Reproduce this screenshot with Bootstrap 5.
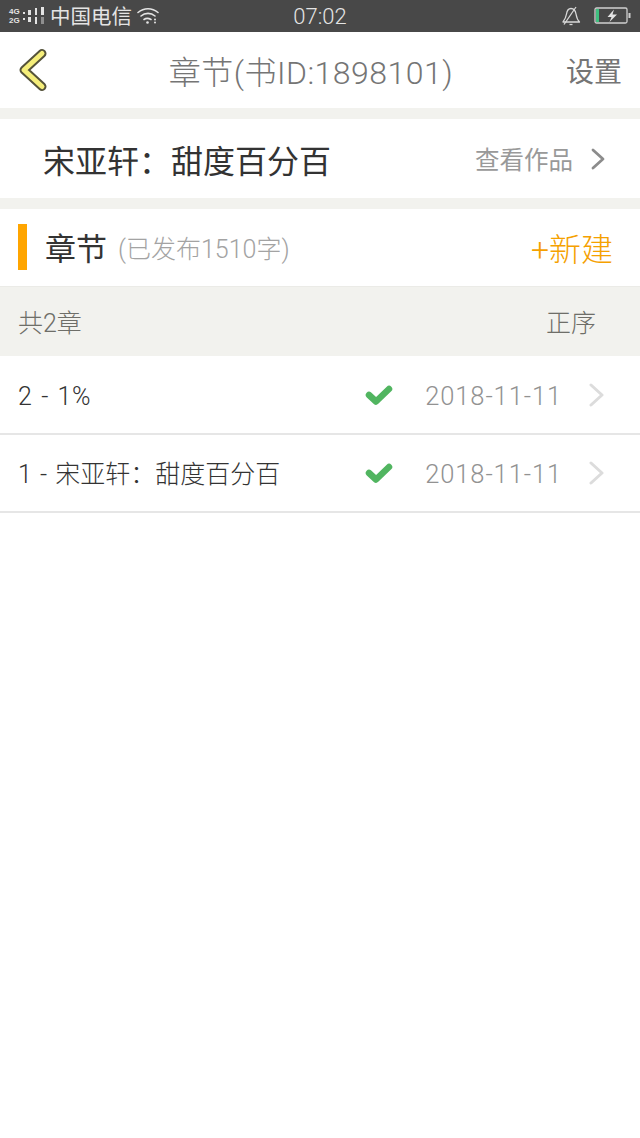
<!DOCTYPE html>
<html lang="zh">

<head>
    <meta charset="UTF-8">
    <meta name="viewport" content="width=device-width, initial-scale=1.0">
    <title>章节</title>
    <link href="https://cdn.jsdelivr.net/npm/bootstrap@5.3.2/dist/css/bootstrap.min.css" rel="stylesheet">
    <style>
        body {
            background: #fff;
            font-family: "Liberation Sans", "Noto Sans CJK SC", sans-serif;
            min-height: 1138px;
        }

        .status-bar {
            height: 32px;
            background: #484848;
            color: #e4e4e4;
            padding: 0 9px;
            position: relative;
        }

        .status-time {
            position: absolute;
            left: 0;
            right: 0;
            top: 5px;
            text-align: center;
            font-size: 22px;
            line-height: 24px;
            font-family: Roboto, sans-serif;
            font-weight: 300;
        }

        .carrier {
            font-size: 20.5px;
            line-height: 32px;
            margin-left: 4px;
            padding-top: 1px;
        }

        .net-label {
            font-size: 8px;
            line-height: 9px;
            font-weight: 700;
            width: 14px;
        }

        .status-bell {
            margin-right: 13px;
        }

        .top-bar {
            height: 76px;
            padding: 0 18px;
            position: relative;
        }

        .top-title {
            position: absolute;
            left: 0;
            right: 0;
            top: 20px;
            padding-right: 18px;
            text-align: center;
            font-size: 32px;
            line-height: 42px;
            letter-spacing: .5px;
            color: #757575;
            font-family: Roboto, "Noto Sans CJK SC", sans-serif;
            font-weight: 300;
        }

        .top-link {
            font-size: 28px;
            color: #757575;
            padding-top: 5px;
        }

        .gap-strip {
            background: #f2f2ee;
            height: 11px;
        }

        .book-row {
            height: 79px;
            padding: 0 35px 0 43px;
        }

        .book-name {
            font-size: 32px;
            color: #333;
            padding-top: 6px;
        }

        .book-link {
            font-size: 24.500px;
            color: #999;
            gap: 18px;
        }

        .book-link-text {
            padding-top: 5px;
        }

        .section-head {
            height: 77px;
            padding: 0 27px 0 18px;
        }

        .accent-bar {
            width: 9px;
            height: 46px;
            background: #ffa500;
            margin: 0 18px 2px 0;
        }

        .section-name {
            font-size: 31px;
            color: #333;
            padding-top: 6px;
        }

        .section-count {
            font-size: 25px;
            color: #a3a3a3;
            margin-left: 11px;
            padding-top: 5px;
            font-family: Roboto, "Noto Sans CJK SC", sans-serif;
            font-weight: 300;
        }

        .new-link {
            font-size: 32px;
            color: #f5a100;
            padding-top: 5px;
            font-family: Roboto, "Noto Sans CJK SC", sans-serif;
            font-weight: 300;
        }

        .sort-bar {
            height: 70px;
            background: #f2f2ee;
            border-top: 1px solid #ebebe7;
            padding: 0 44px 0 18px;
            font-size: 25px;
            color: #6e6e68;
            font-family: Roboto, "Noto Sans CJK SC", sans-serif;
            font-weight: 300;
        }

        .sort-bar span {
            padding-top: 5px;
        }

        .chapter-list {
            margin-top: 1px;
        }

        .chapter-list .list-group-item {
            height: 78px;
            padding: 0 35px 0 18px;
            border-color: #e6e6e6;
            border-width: 0 0 2px;
            font-family: Roboto, "Noto Sans CJK SC", sans-serif;
            font-weight: 300;
        }

        /* list-group-flush quita el borde de la última fila */
        .chapter-list .list-group-item:last-child {
            border-bottom-width: 2px;
        }

        .chapter-name {
            font-size: 25px;
            color: #333;
            word-spacing: 2px;
            padding-top: 3px;
        }

        .chapter-name-num {
            letter-spacing: .6px;
        }

        .chapter-date {
            font-size: 25.500px;
            letter-spacing: .9px;
            color: #929292;
            margin: 0 27px 0 32px;
            padding-top: 3px;
        }
    </style>
</head>

<body>
    <!-- Barra de estado -->
    <div class="status-bar d-flex align-items-center">
        <div class="net-label">4G<br>2G</div>
        <svg width="23" height="18" viewBox="0 0 23 18" fill="#e4e4e4">
            <rect x="0" y="5" width="2" height="2" />
            <rect x="0" y="11" width="2" height="2" />
            <rect x="5" y="3" width="3" height="5" />
            <rect x="5" y="10" width="3" height="5" />
            <rect x="12" y="1" width="2" height="7" />
            <rect x="12" y="10" width="2" height="7" />
            <rect x="18" y="0" width="3" height="8" />
            <rect x="18" y="10" width="3" height="7" fill="#8f8f8f" />
        </svg>
        <span class="carrier">中国电信</span>
        <svg class="ms-1" width="24" height="18" viewBox="0 0 24 18" fill="none" stroke="#e4e4e4" stroke-width="1.600" stroke-linecap="round">
            <path d="M2 5.500C8 .5 16 .5 22 5.500" />
            <path d="M5 9C9 5.500 15 5.500 19 9" />
            <path d="M8 12.500C10 11 12.500 11 15 12.500" />
            <circle cx="11.500" cy="15.500" r="1.300" fill="#e4e4e4" stroke="none" />
            <circle cx="19" cy="12.500" r="1" fill="#e4e4e4" stroke="none" />
            <circle cx="19" cy="15.500" r="1" fill="#e4e4e4" stroke="none" />
        </svg>
        <div class="status-time">07:02</div>
        <div class="ms-auto d-flex align-items-center">
            <svg class="status-bell" width="20" height="20" viewBox="0 0 20 20" fill="none" stroke="#d8d8d8" stroke-width="1.300" stroke-linejoin="round">
                <path d="M2 16C4 13.500 5 11 5.500 8C6 4.500 8 2.500 10 2.500C13 2.500 14.500 5 15 8C15.500 11 16.500 14 18.500 16Z" />
                <path d="M3 18.500L15 1" />
                <path d="M8.500 18.500H11.500" />
            </svg>
            <svg width="37" height="18" viewBox="0 0 37 18">
                <rect x="1" y="1" width="32" height="15" rx="1.500" fill="none" stroke="#cfcfcf" stroke-width="1.300" />
                <rect x="2" y="2" width="3" height="13" fill="#3fbf7f" />
                <rect x="34.500" y="6" width="2" height="5" fill="#cfcfcf" />
                <path d="M20 2.500L13.500 10H17.500L15.500 15L23 7.500H18.500Z" fill="#e4e4e4" />
            </svg>
        </div>
    </div>

    <!-- Cabecera -->
    <div class="top-bar d-flex align-items-center justify-content-between">
        <svg width="30" height="44" viewBox="0 0 30 44">
            <path d="M24 5.500L6 22L24 38.500" fill="none" stroke="#55533a" stroke-width="9" stroke-linecap="round" stroke-linejoin="round" />
            <path d="M24 5.500L6 22L24 38.500" fill="none" stroke="#f5ee7a" stroke-width="5" stroke-linecap="round" stroke-linejoin="round" />
        </svg>
        <div class="top-title">章节(书ID:1898101)</div>
        <span class="top-link">设置</span>
    </div>
    <div class="gap-strip"></div>

    <!-- Libro -->
    <div class="book-row d-flex align-items-center justify-content-between">
        <span class="book-name">宋亚轩：甜度百分百</span>
        <span class="book-link d-flex align-items-center">
            <span class="book-link-text">查看作品</span>
            <svg width="14" height="22" viewBox="0 0 14 22" fill="none" stroke="#8c8c8c" stroke-width="2.800" stroke-linecap="round" stroke-linejoin="round">
                <path d="M2 2L12 11L2 20" />
            </svg>
        </span>
    </div>
    <div class="gap-strip"></div>

    <!-- Encabezado de capítulos -->
    <div class="section-head d-flex align-items-center">
        <div class="accent-bar"></div>
        <span class="section-name">章节</span>
        <span class="section-count">(已发布1510字)</span>
        <span class="new-link ms-auto">+新建</span>
    </div>
    <div class="sort-bar d-flex align-items-center justify-content-between">
        <span>共2章</span>
        <span>正序</span>
    </div>

    <!-- Lista de capítulos -->
    <ul class="list-group list-group-flush chapter-list">
        <li class="list-group-item d-flex align-items-center">
            <span class="chapter-name chapter-name-num me-auto">2 - 1%</span>
            <svg width="28" height="22" viewBox="0 0 28 22" fill="none" stroke="#51b560" stroke-width="6.500" stroke-linecap="round" stroke-linejoin="round">
                <path d="M4 11L11 17.500L24 5" />
            </svg>
            <span class="chapter-date">2018-11-11</span>
            <svg width="16" height="24" viewBox="0 0 16 24" fill="none" stroke="#dcdcdc" stroke-width="3" stroke-linecap="round" stroke-linejoin="round">
                <path d="M2 2L13 12L2 22" />
            </svg>
        </li>
        <li class="list-group-item d-flex align-items-center">
            <span class="chapter-name me-auto">1 - 宋亚轩：甜度百分百</span>
            <svg width="28" height="22" viewBox="0 0 28 22" fill="none" stroke="#51b560" stroke-width="6.500" stroke-linecap="round" stroke-linejoin="round">
                <path d="M4 11L11 17.500L24 5" />
            </svg>
            <span class="chapter-date">2018-11-11</span>
            <svg width="16" height="24" viewBox="0 0 16 24" fill="none" stroke="#dcdcdc" stroke-width="3" stroke-linecap="round" stroke-linejoin="round">
                <path d="M2 2L13 12L2 22" />
            </svg>
        </li>
    </ul>

    <script src="https://cdn.jsdelivr.net/npm/bootstrap@5.3.2/dist/js/bootstrap.bundle.min.js"></script>
</body>

</html>
